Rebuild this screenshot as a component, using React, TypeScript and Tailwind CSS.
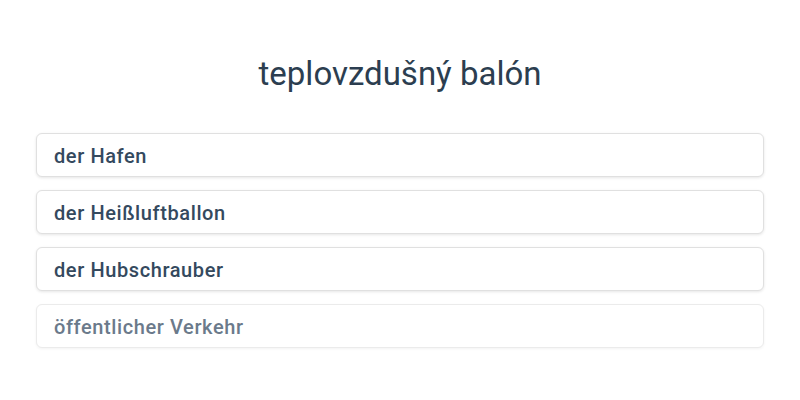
export default function App() {
  const options = ["der Hafen", "der Heißluftballon", "der Hubschrauber", "öffentlicher Verkehr"];

  return (
    <div
      className="w-[800px] h-[400px] bg-white px-9 pt-[53px]"
      style={{ fontFamily: "Roboto, sans-serif" }}
    >
      <h1 className="text-center text-[33px] leading-[42px] text-[#2c3e50] mb-[38px]">
        teplovzdušný balón
      </h1>
      <div className="flex flex-col gap-[13px]">
        {options.map((o, i) => (
          <div
            key={o}
            className={
              i === 3
                ? "h-[44px] flex items-center pt-[2px] px-[17px] rounded-md border border-[#ebebeb] bg-white shadow-[0_1px_3px_rgba(0,0,0,0.05)] text-[20px] tracking-[0.6px] font-medium text-[#6b7a8b]"
                : "h-[44px] flex items-center pt-[2px] px-[17px] rounded-md border border-[#e0e0e0] bg-white shadow-[0_1px_3px_rgba(0,0,0,0.1)] text-[20px] tracking-[0.6px] font-medium text-[#34495e]"
            }
          >
            {o}
          </div>
        ))}
      </div>
    </div>
  );
}
